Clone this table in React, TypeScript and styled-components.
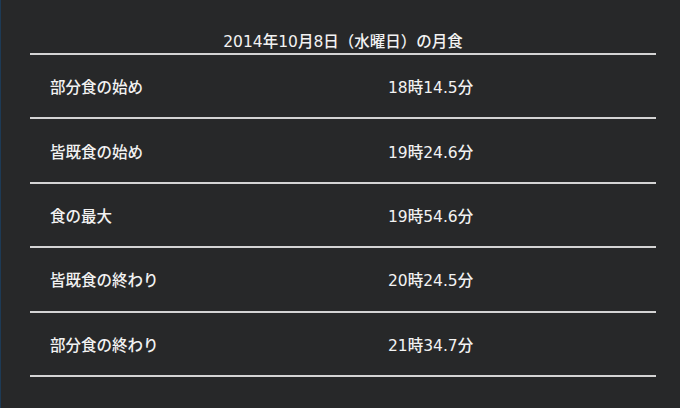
import React from "react";
import styled, { createGlobalStyle } from "styled-components";

const Global = createGlobalStyle`
  html, body { margin: 0; padding: 0; background: #272829; }
  body {
    font-family: "DejaVu Sans", "Noto Sans CJK JP", sans-serif;
    font-weight: 500;
    color: #f2f2f2;
  }
`;

const Page = styled.div`
  width: 680px;
  height: 408px;
  box-sizing: border-box;
  background: #272829;
  border-left: 1px solid #1d3a55;
  padding: 0 24px 0 29px;
`;

const Table = styled.div`
  display: flex;
  flex-direction: column;
`;

const Caption = styled.div`
  height: 55px;
  box-sizing: border-box;
  padding-top: 31px;
  text-align: center;
  font-size: 15.5px;
  line-height: 22px;
  border-bottom: 2px solid #d4d4d4;
`;

const Row = styled.div`
  display: grid;
  grid-template-columns: 358px 1fr;
  align-items: center;
  height: 64.4px;
  box-sizing: border-box;
  border-bottom: 2px solid #d4d4d4;
  font-size: 15.5px;
`;

const Label = styled.div`
  padding-left: 20px;
`;

const Value = styled.div``;

const rows: [string, string][] = [
  ["部分食の始め", "18時14.5分"],
  ["皆既食の始め", "19時24.6分"],
  ["食の最大", "19時54.6分"],
  ["皆既食の終わり", "20時24.5分"],
  ["部分食の終わり", "21時34.7分"],
];

export default function App() {
  return (
    <>
      <Global />
      <Page>
        <Table>
          <Caption>2014年10月8日（水曜日）の月食</Caption>
          {rows.map(([l, v]) => (
            <Row key={l}>
              <Label>{l}</Label>
              <Value>{v}</Value>
            </Row>
          ))}
        </Table>
      </Page>
    </>
  );
}
